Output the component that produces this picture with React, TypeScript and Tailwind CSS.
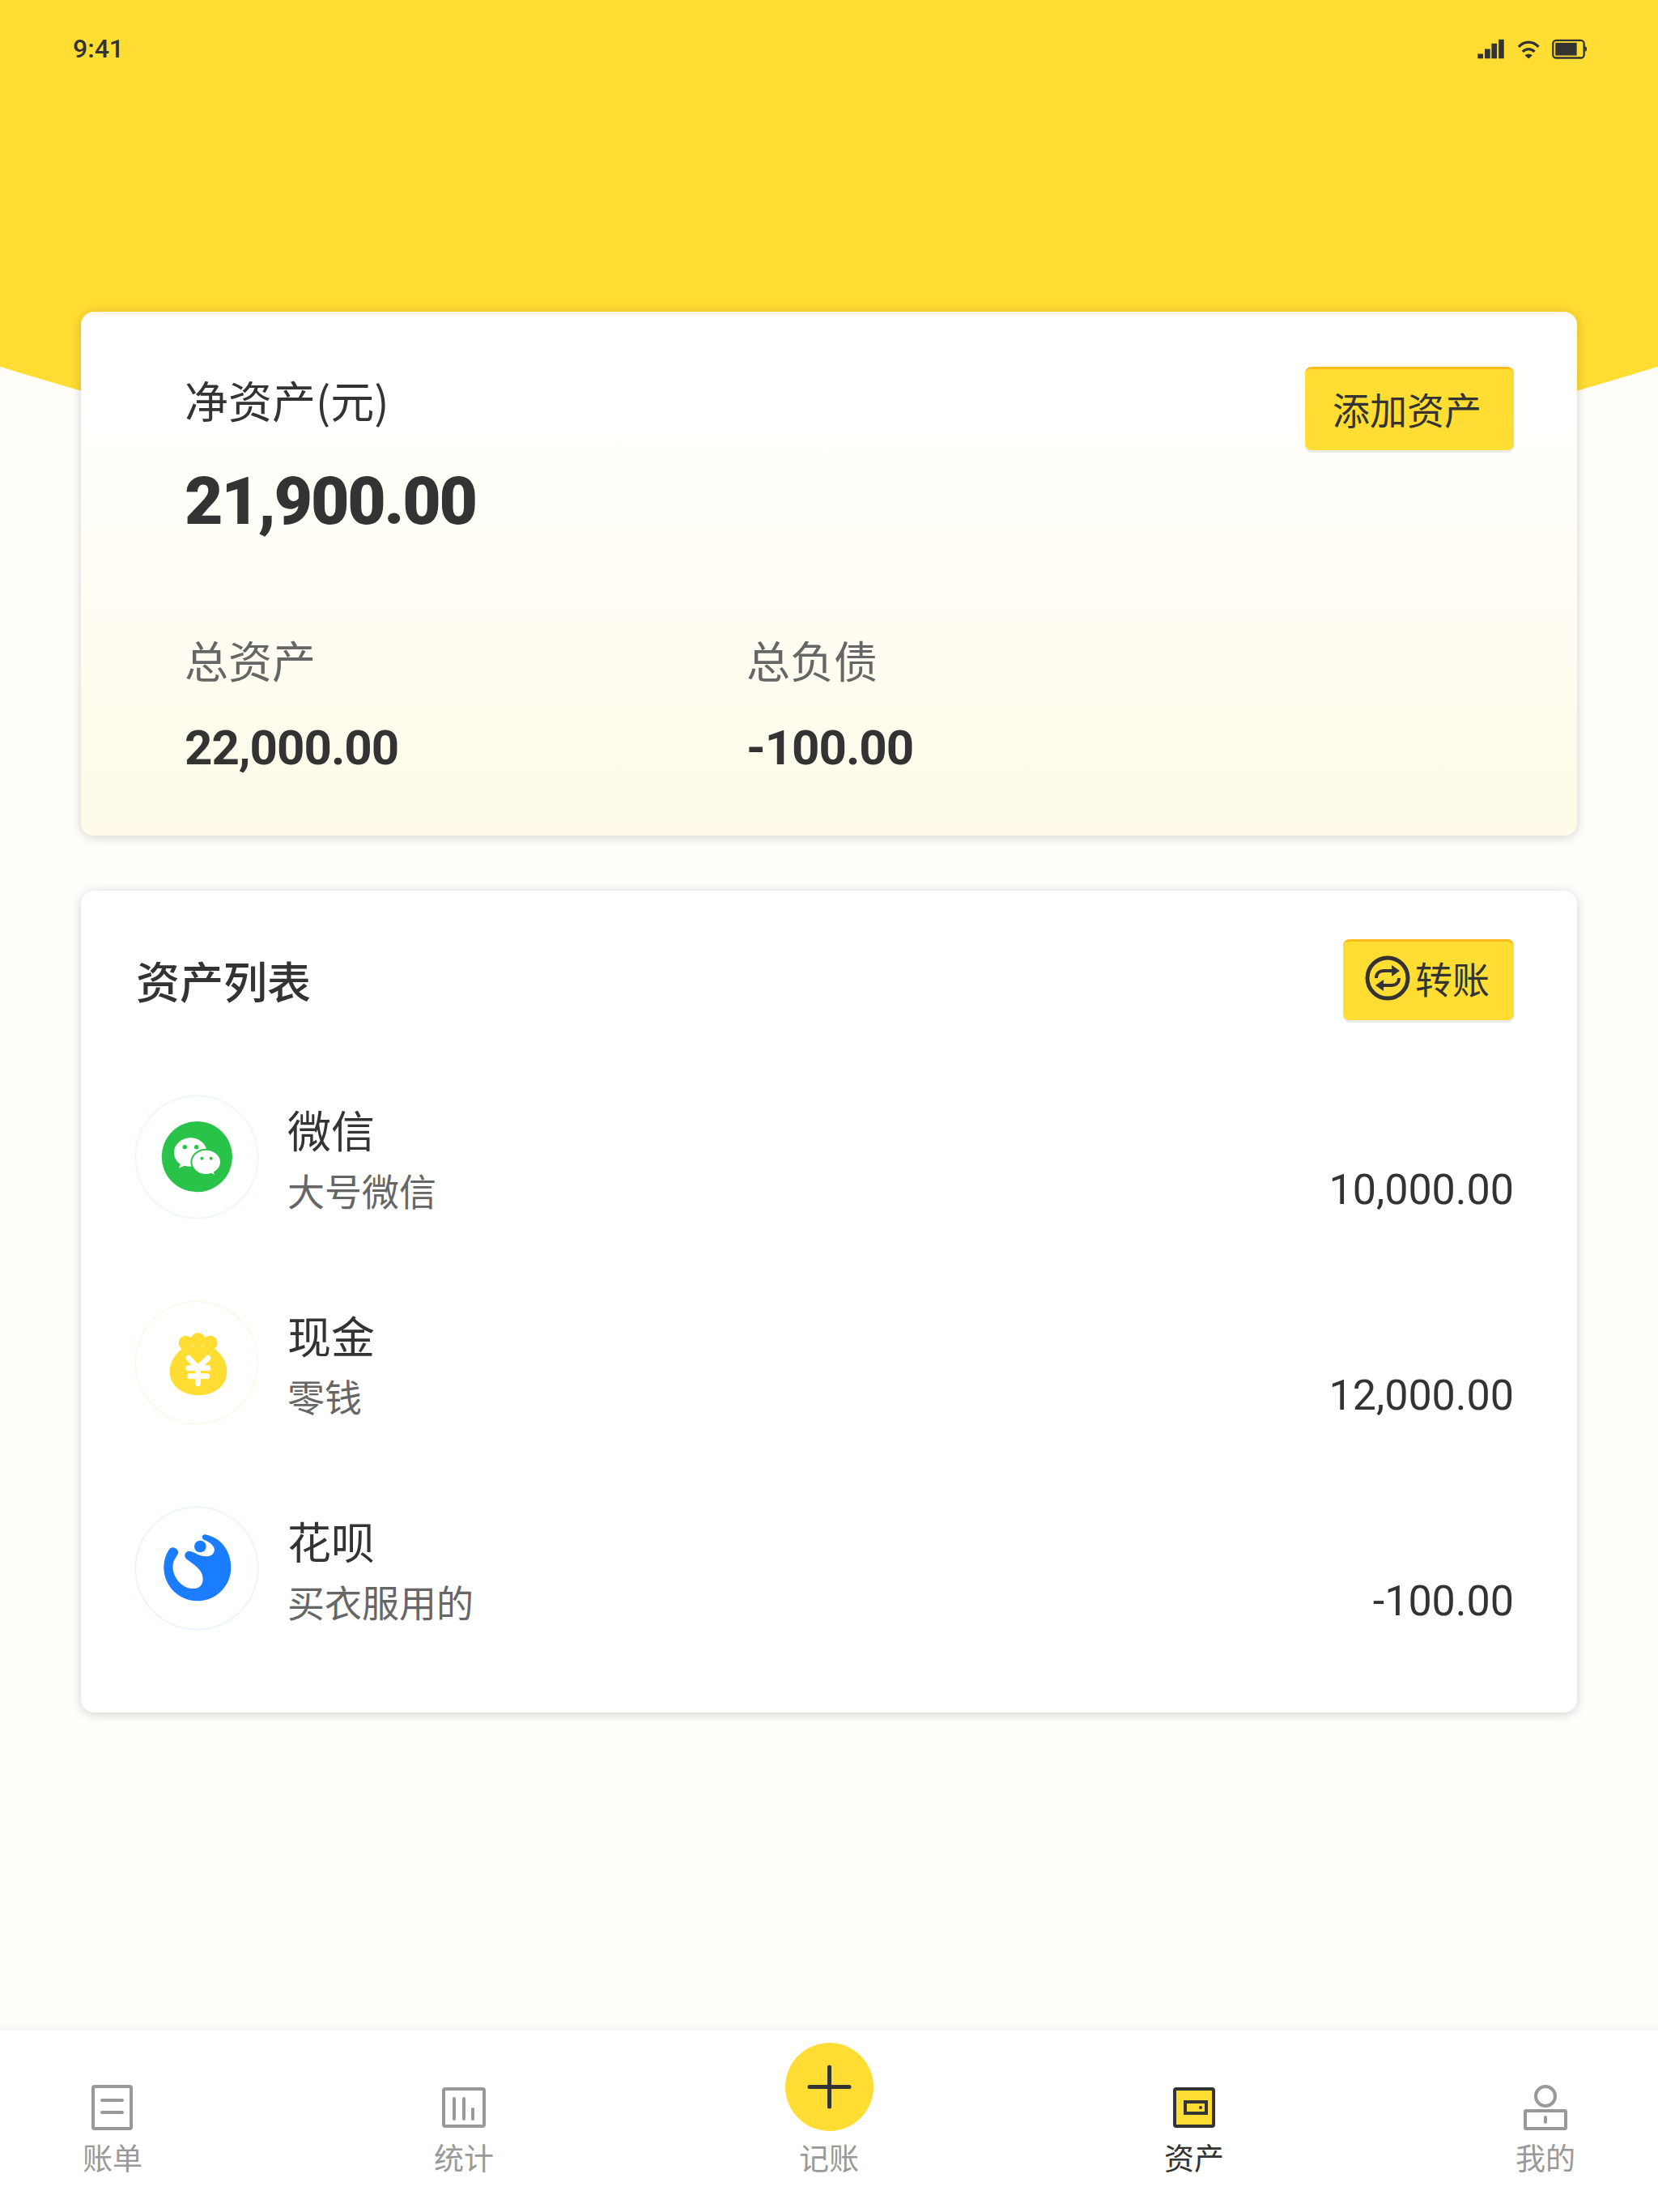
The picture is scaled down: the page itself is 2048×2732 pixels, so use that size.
const cjk = "font-['Noto_Sans_CJK_SC',sans-serif]";
const num = "font-['Roboto',sans-serif]";

const assets = [
  { name: "微信", note: "大号微信", amount: "10,000.00", icon: <WechatIcon />, ring: "shadow-[0_0_3px_rgba(42,195,74,0.3)]" },
  { name: "现金", note: "零钱", amount: "12,000.00", icon: <CashIcon />, ring: "shadow-[0_0_3px_rgba(230,200,60,0.4)]" },
  { name: "花呗", note: "买衣服用的", amount: "-100.00", icon: <HuabeiIcon />, ring: "shadow-[0_0_3px_rgba(26,125,255,0.3)]" },
];

function WechatIcon() {
  return (
    <svg viewBox="55 43 450 450" className="w-[150px] h-[150px]">
      <circle cx="281" cy="267" r="131" fill="#2AC34A" />
      <path d="M257 197c-34 0-61 25-61 55 0 18 9 32 24 43l-7 14 22-9c7 2 14 3 22 3 34 0 61-24 61-51 0-30-27-55-61-55z" fill="#fff" />
      <path d="M315 240c-30 0-55 21-55 47s25 47 55 47c7 0 13-1 19-3l17 8-5-14c14-9 24-23 24-38 0-26-25-47-55-47z" fill="#fff" stroke="#2AC34A" strokeWidth="6" />
      <circle cx="236" cy="231" r="8" fill="#2AC34A" />
      <circle cx="279" cy="231" r="8" fill="#2AC34A" />
      <circle cx="299" cy="273" r="6" fill="#2AC34A" />
      <circle cx="333" cy="273" r="6" fill="#2AC34A" />
    </svg>
  );
}

function CashIcon() {
  return (
    <svg viewBox="55 50 450 450" className="w-[150px] h-[150px]">
      <circle cx="240" cy="202" r="27" fill="#FFDD33" />
      <circle cx="285" cy="191" r="27" fill="#FFDD33" />
      <circle cx="330" cy="202" r="27" fill="#FFDD33" />
      <path d="M240 215h90l20 12c26 20 42 50 42 82 0 52-48 87-106 87s-106-35-106-87c0-32 16-62 42-82z" fill="#FFDD33" />
      <path d="M250 258l35 36 37-36M250 295h72M255 325h63M285 295v57" fill="none" stroke="#fff" strokeWidth="20" strokeLinecap="round" strokeLinejoin="round" />
    </svg>
  );
}

function HuabeiIcon() {
  return (
    <svg viewBox="55 35 450 450" className="w-[150px] h-[150px]">
      <path d="M312 135C370 145 407 195 407 257C407 325 352 381 283 381C214 381 158 325 158 257C158 230 166 207 178 190C186 178 205 182 211 196C214 205 207 212 202 220C193 233 190 248 192 262C196 300 230 335 265 335C290 336 303 322 303 298C303 265 265 243 245 228C232 220 232 200 250 196C270 196 285 215 315 216C340 216 352 195 342 180C333 165 320 160 308 155C296 150 298 134 312 135Z" fill="#1A7DFF" />
      <circle cx="293" cy="179" r="22" fill="#1A7DFF" />
    </svg>
  );
}

function TabBill() {
  return (
    <svg viewBox="0 0 60 58" className="w-[60px] h-[58px]" fill="none" stroke="#999" strokeWidth="4" strokeLinecap="round">
      <rect x="6" y="3" width="47" height="52" rx="2" />
      <path d="M17 20h25M17 35h25" />
    </svg>
  );
}

function TabStats() {
  return (
    <svg viewBox="0 0 60 58" className="w-[60px] h-[58px]" fill="none" stroke="#999" strokeWidth="4" strokeLinecap="round">
      <rect x="5" y="6" width="50" height="46" rx="2" />
      <path d="M18 18v25M30 18v25M41 31v12" />
    </svg>
  );
}

function TabAssets() {
  return (
    <svg viewBox="0 0 60 58" className="w-[60px] h-[58px]" fill="none" stroke="#333" strokeWidth="4" strokeLinecap="round">
      <rect x="6" y="6" width="48" height="46" rx="2" fill="#FFDD33" />
      <rect x="19" y="22" width="26" height="14" />
      <circle cx="38" cy="29" r="2" fill="#333" stroke="none" />
    </svg>
  );
}

function TabMine() {
  return (
    <svg viewBox="0 0 60 58" className="w-[60px] h-[58px]" fill="none" stroke="#999" strokeWidth="4" strokeLinecap="round">
      <circle cx="30" cy="15" r="12" />
      <rect x="5" y="33" width="50" height="22" rx="1" />
      <path d="M30 41v6" />
    </svg>
  );
}

function TabPlus() {
  return (
    <svg viewBox="0 0 109 109" className="w-[109px] h-[109px]" fill="none">
      <circle cx="54.5" cy="54.5" r="54.5" fill="#FFDD33" />
      <path d="M30 54.5h49M54.5 30v49" stroke="#333" strokeWidth="5" strokeLinecap="round" />
    </svg>
  );
}

function StatusIcons() {
  return (
    <svg viewBox="130 50 410 80" className="w-[137px] h-[27px]" fill="none">
      <path d="M137 108h20v17h-20zM163 90h20v35h-20zM188 70h20v55h-20zM214 55h20v70h-20z" fill="#333" />
      <path d="M288 82c22-23 52-23 74 0M303 100c13-13 31-13 44 0" stroke="#333" strokeWidth="10" />
      <path d="M311 113c8-6 20-6 28 0l-14 13z" fill="#333" />
      <rect x="415" y="58" width="115" height="65" rx="12" stroke="#333" strokeWidth="7" />
      <rect x="424" y="67" width="79" height="47" fill="#333" />
      <path d="M534 80c5 1 6 6 6 10s-1 9-6 10z" fill="#333" />
    </svg>
  );
}

function TransferIcon() {
  return (
    <svg viewBox="0 0 56 56" className="w-[56px] h-[56px]" fill="none" stroke="#333" strokeWidth="4">
      <circle cx="28" cy="28" r="25" strokeWidth="5" />
      <path d="M14 28c0-6 4-9 9-9h16" strokeWidth="4" />
      <path d="M33 12l10 7-10 7z" fill="#333" stroke="none" />
      <path d="M42 28c0 6-4 9-9 9H17" strokeWidth="4" />
      <path d="M23 30l-10 7 10 7z" fill="#333" stroke="none" />
    </svg>
  );
}

function Tab({ label, active, icon, iconGap }: { label: string; active?: boolean; icon: React.ReactNode; iconGap: string }) {
  return (
    <div className="flex flex-col items-center justify-end">
      <div className={iconGap}>{icon}</div>
      <span className={`text-[37px] leading-[44px] ${active ? "text-[#333]" : "text-[#999]"}`}>{label}</span>
    </div>
  );
}

export default function App() {
  return (
    <div className={`relative w-[2048px] h-[2732px] flex flex-col overflow-hidden bg-[#FFFEFB] text-[#333] ${cjk}`}>
      {/* yellow header with the curved bottom */}
      <div className="relative h-[611px] shrink-0 overflow-hidden">
        <div className="absolute left-1/2 bottom-0 -translate-x-1/2 w-[6780px] h-[6780px] rounded-full bg-[#FFDD33]" />
        <div className="relative flex items-center justify-between px-[90px] pt-[46px] pr-[88px]">
          <span className={`text-[32px] leading-[28px] font-medium ${num}`}>9:41</span>
          <StatusIcons />
        </div>
      </div>

      <div className="relative -mt-[226px] flex-1 flex flex-col gap-[68px] px-[100px]">
        <section className="h-[647px] rounded-[16px] bg-gradient-to-b from-white from-10% to-[#FFFBE8] shadow-[0_2px_14px_rgba(0,0,0,0.18),inset_0_8px_8px_-8px_rgba(255,190,60,0.35)] pl-[128px] pr-[78px] pt-[65px]">
          <div className="flex justify-between">
            <div>
              <div className="text-[54px] leading-[88px]">净资产(元)</div>
              <div className={`text-[82px] leading-[96px] font-black tracking-[-2.2px] mt-[33px] ${num}`}>21,900.00</div>
            </div>
            <button className="w-[258px] h-[103px] mt-[3px] pr-[6px] pb-[4px] rounded-[8px] bg-[#FFDD33] border-t-[3px] border-[#FFBB1A] shadow-[0_3px_0_rgba(0,0,0,0.08)] text-[46px]">添加资产</button>
          </div>
          <div className="flex mt-[110px]">
            <div className="w-[694px]">
              <div className="text-[54px] leading-[76px] text-[#666]">总资产</div>
              <div className={`text-[60px] leading-[76px] font-bold tracking-[-1px] mt-[33px] ${num}`}>22,000.00</div>
            </div>
            <div>
              <div className="text-[54px] leading-[76px] text-[#666]">总负债</div>
              <div className={`text-[60px] leading-[76px] font-bold tracking-[-1px] mt-[33px] ${num}`}>-100.00</div>
            </div>
          </div>
        </section>

        <section className="h-[1015px] rounded-[16px] bg-white shadow-[0_2px_14px_rgba(0,0,0,0.18)] pl-[68px] pr-[78px] pt-[60px]">
          <div className="flex items-center justify-between">
            <h2 className="text-[54px] font-medium">资产列表</h2>
            <button className="flex items-center gap-[6px] w-[211px] h-[100px] pl-[27px] pb-[8px] rounded-[8px] bg-[#FFDD33] border-t-[3px] border-[#FFBB1A] shadow-[0_3px_0_rgba(0,0,0,0.08)] text-[46px]">
              <TransferIcon />
              转账
            </button>
          </div>
          <ul className="mt-[94px] flex flex-col gap-[104px]">
            {assets.map((a) => (
              <li key={a.name} className="flex items-center h-[150px]">
                <div className={`w-[150px] h-[150px] rounded-full bg-white ${a.ring}`}>{a.icon}</div>
                <div className="ml-[37px] flex-1">
                  <div className="text-[54px] leading-[70px]">{a.name}</div>
                  <div className="text-[46px] leading-[60px] mt-[9px] text-[#666]">{a.note}</div>
                </div>
                <div className={`text-[52px] mt-[82px] ${num}`}>{a.amount}</div>
              </li>
            ))}
          </ul>
        </section>
      </div>

      <nav className="relative h-[224px] shrink-0 grid grid-cols-[278px_590px_312px_590px_278px] pb-[46px] bg-white shadow-[0_-4px_8px_rgba(0,0,0,0.05)]">
        <Tab label="账单" icon={<TabBill />} iconGap="mb-[10px]" />
        <Tab label="统计" icon={<TabStats />} iconGap="mb-[10px]" />
        <Tab label="记账" icon={<TabPlus />} iconGap="mb-[10px]" />
        <Tab label="资产" active icon={<TabAssets />} iconGap="mb-[10px]" />
        <Tab label="我的" icon={<TabMine />} iconGap="mb-[10px]" />
      </nav>
    </div>
  );
}
